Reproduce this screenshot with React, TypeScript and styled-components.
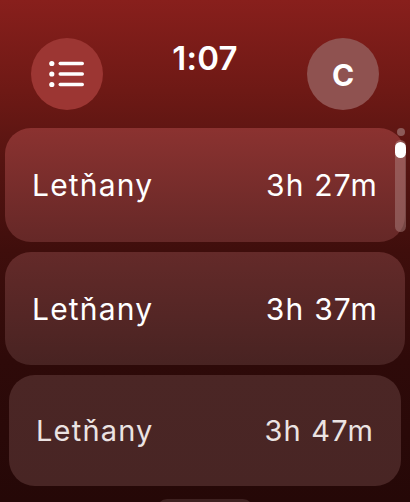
import React from "react";
import styled, { createGlobalStyle } from "styled-components";

const Global = createGlobalStyle`
  html, body { margin: 0; padding: 0; }
  body {
    width: 410px;
    height: 502px;
    overflow: hidden;
    background: #250807;
    font-family: Inter, "Noto Sans", "Liberation Sans", sans-serif;
    -webkit-font-smoothing: antialiased;
  }
`;

const Screen = styled.div`
  position: relative;
  width: 410px;
  height: 502px;
  overflow: hidden;
  background: linear-gradient(
    180deg,
    #881f1c 0%,
    #6e1915 18%,
    #561411 32%,
    #3f0e0c 50%,
    #2e0a09 72%,
    #250807 100%
  );
  display: flex;
  flex-direction: column;
`;

const Header = styled.div`
  display: flex;
  justify-content: space-between;
  align-items: flex-start;
  padding: 38px 31px 0 31px;
  height: 90px;
  box-sizing: border-box;
`;

const RoundButton = styled.div<{ $bg: string }>`
  width: 72px;
  height: 72px;
  border-radius: 50%;
  background: ${(p) => p.$bg};
  display: flex;
  align-items: center;
  justify-content: center;
  color: #fff;
`;

const Initial = styled.span`
  font-size: 30px;
  font-weight: 700;
  line-height: 1;
  margin-top: 1px;
`;

const Time = styled.div`
  color: #fff;
  font-size: 33px;
  font-weight: 600;
  line-height: 1;
  margin-top: 4px;
  letter-spacing: 0.2px;
`;

const List = styled.div`
  display: flex;
  flex-direction: column;
  gap: 10px;
  padding: 38px 5px 0 5px;
`;

const Card = styled.div<{ $top: string; $bottom: string; $inset?: number; $h: number; $dim?: boolean }>`
  height: ${(p) => p.$h}px;
  margin: 0 ${(p) => p.$inset ?? 0}px;
  border-radius: 26px;
  background: linear-gradient(180deg, ${(p) => p.$top}, ${(p) => p.$bottom});
  display: flex;
  align-items: center;
  justify-content: space-between;
  padding: 0 27px 0 27px;
  color: ${(p) => (p.$dim ? "#ebe3e2" : "#ffffff")};
  font-size: ${(p) => (p.$dim ? 29 : 30)}px;
  font-weight: 400;
  letter-spacing: 1.2px;
  box-sizing: border-box;
  flex-shrink: 0;
`;

const Label = styled.span`
  line-height: 1;
`;

const Peek = styled.div`
  align-self: center;
  width: 96px;
  height: 20px;
  margin-top: 3px;
  border-radius: 12px;
  background: #3e2120;
`;

const Scroll = styled.div`
  position: absolute;
  left: 395px;
  top: 128px;
  width: 11px;
  display: flex;
  flex-direction: column;
  align-items: center;
  gap: 4px;
`;

const Dot = styled.div`
  width: 8px;
  height: 8px;
  border-radius: 50%;
  background: #8c5a58;
`;

const Track = styled.div`
  position: relative;
  width: 11px;
  height: 92px;
  border-radius: 6px;
  background: rgba(180, 140, 138, 0.45);
`;

const Thumb = styled.div`
  position: absolute;
  left: 0;
  top: 2px;
  width: 11px;
  height: 16px;
  border-radius: 6px;
  background: #ffffff;
`;

const ListIcon = () => (
  <svg width="36" height="28" viewBox="0 0 36 28" fill="#fff">
    <circle cx="2.8" cy="3.5" r="2.6" />
    <circle cx="2.8" cy="14" r="2.6" />
    <circle cx="2.8" cy="24.5" r="2.6" />
    <rect x="9.5" y="1.8" width="25.5" height="3.4" rx="1.7" />
    <rect x="9.5" y="12.3" width="25.5" height="3.4" rx="1.7" />
    <rect x="9.5" y="22.8" width="25.5" height="3.4" rx="1.7" />
  </svg>
);

const rows = [
  { name: "Letňany", time: "3h 27m", top: "#8b3230", bottom: "#652827", h: 114, inset: 0 },
  { name: "Letňany", time: "3h 37m", top: "#642a29", bottom: "#482322", h: 113, inset: 0 },
  { name: "Letňany", time: "3h 47m", top: "#4b2625", bottom: "#482524", h: 111, inset: 4, dim: true },
];

export default function App() {
  return (
    <>
      <Global />
      <Screen>
        <Header>
          <RoundButton $bg="#9c3633">
            <ListIcon />
          </RoundButton>
          <Time>1:07</Time>
          <RoundButton $bg="#8f5250">
            <Initial>C</Initial>
          </RoundButton>
        </Header>
        <List>
          {rows.map((r, i) => (
            <Card key={i} $top={r.top} $bottom={r.bottom} $h={r.h} $inset={r.inset} $dim={r.dim}>
              <Label>{r.name}</Label>
              <Label>{r.time}</Label>
            </Card>
          ))}
          <Peek />
        </List>
        <Scroll>
          <Dot />
          <Track>
            <Thumb />
          </Track>
        </Scroll>
      </Screen>
    </>
  );
}
